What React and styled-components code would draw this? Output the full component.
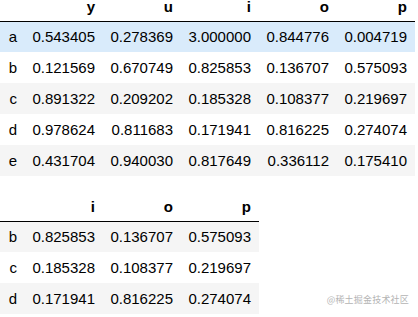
import React from "react";
import styled, { createGlobalStyle } from "styled-components";

const Global = createGlobalStyle`
  html, body { margin: 0; padding: 0; background: #fff; }
  body { font-family: "Liberation Sans", Arial, sans-serif; font-size: 15px; color: #000; }
  th, td { box-sizing: border-box; }
`;

const Page = styled.div`
  position: relative;
  width: 418px;
  height: 317px;
  overflow: hidden;
  display: flex;
  flex-direction: column;
  align-items: flex-start;
  gap: 24px;
`;

const Table = styled.table`
  border-collapse: collapse;
  border-spacing: 0;
  table-layout: fixed;
  width: ${(p) => 25 + 78 * p.$cols}px;
`;

const HeadRow = styled.tr`
  height: 21px;
  border-bottom: 1px solid #000;
`;

const HeadCell = styled.th`
  width: ${(p) => (p.$index ? 25 : 78)}px;
  padding: 0 8px 0 0;
  text-align: right;
  vertical-align: top;
  font-weight: bold;
  line-height: 13px;
`;

const Row = styled.tr`
  height: 31px;
  background: ${(p) => (p.$hover ? "#d9ebfb" : p.$odd ? "#f5f5f5" : "#fff")};
`;

const IndexCell = styled.th`
  padding: 0 8px 0 0;
  text-align: right;
  font-weight: normal;
  vertical-align: middle;
  line-height: 17px;
`;

const Cell = styled.td`
  padding: 0 8px 0 0;
  text-align: right;
  vertical-align: middle;
  white-space: nowrap;
  line-height: 17px;
`;

const Watermark = styled.div`
  position: absolute;
  right: 9px;
  bottom: 11px;
  font-family: "Noto Sans CJK SC", sans-serif;
  font-size: 9px;
  color: #b4b4b4;
  letter-spacing: 0.2px;
`;

const table1 = {
  cols: ["y", "u", "i", "o", "p"],
  rows: [
    ["a", "0.543405", "0.278369", "3.000000", "0.844776", "0.004719"],
    ["b", "0.121569", "0.670749", "0.825853", "0.136707", "0.575093"],
    ["c", "0.891322", "0.209202", "0.185328", "0.108377", "0.219697"],
    ["d", "0.978624", "0.811683", "0.171941", "0.816225", "0.274074"],
    ["e", "0.431704", "0.940030", "0.817649", "0.336112", "0.175410"],
  ],
};

const table2 = {
  cols: ["i", "o", "p"],
  rows: [
    ["b", "0.825853", "0.136707", "0.575093"],
    ["c", "0.185328", "0.108377", "0.219697"],
    ["d", "0.171941", "0.816225", "0.274074"],
  ],
};

function DataFrame({ data, hoverRow }) {
  return (
    <Table $cols={data.cols.length}>
      <thead>
        <HeadRow>
          <HeadCell $index />
          {data.cols.map((c) => (
            <HeadCell key={c}>{c}</HeadCell>
          ))}
        </HeadRow>
      </thead>
      <tbody>
        {data.rows.map((r, i) => (
          <Row key={r[0]} $odd={i % 2 === 0} $hover={i === hoverRow}>
            <IndexCell>{r[0]}</IndexCell>
            {r.slice(1).map((v, j) => (
              <Cell key={j}>{v}</Cell>
            ))}
          </Row>
        ))}
      </tbody>
    </Table>
  );
}

export default function App() {
  return (
    <>
      <Global />
      <Page>
        <DataFrame data={table1} hoverRow={0} />
        <DataFrame data={table2} hoverRow={-1} />
        <Watermark>@稀土掘金技术社区</Watermark>
      </Page>
    </>
  );
}
